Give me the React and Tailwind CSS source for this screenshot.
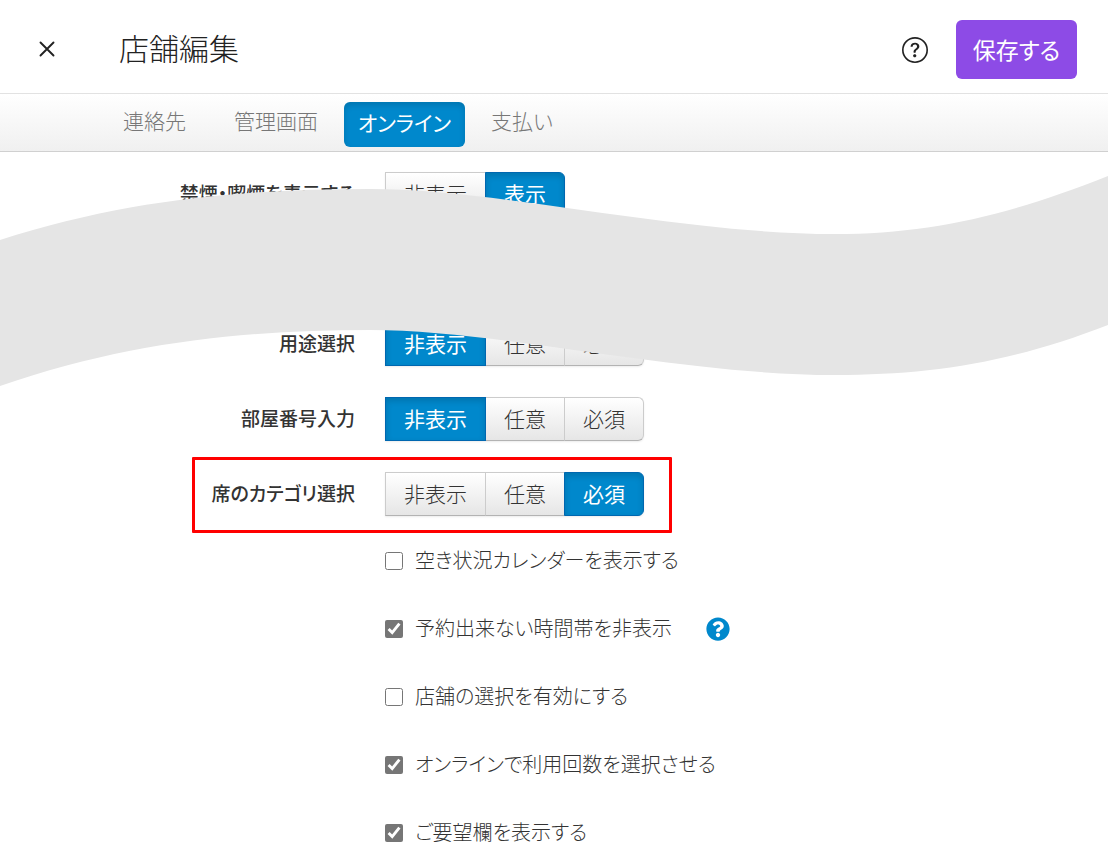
import React, { useState } from "react";
import { BsQuestionCircle } from "react-icons/bs";
import { FaQuestionCircle } from "react-icons/fa";

const tabs = ["連絡先", "管理画面", "オンライン", "支払い"];

const choiceFields = [
  {
    name: "smoking",
    label: "禁煙・喫煙を表示する",
    options: ["非表示", "表示"],
    value: "表示",
  },
  {
    name: "purpose",
    label: "用途選択",
    options: ["非表示", "任意", "必須"],
    value: "非表示",
    afterBreak: true,
  },
  {
    name: "room",
    label: "部屋番号入力",
    options: ["非表示", "任意", "必須"],
    value: "非表示",
  },
  {
    name: "category",
    label: "席のカテゴリ選択",
    options: ["非表示", "任意", "必須"],
    value: "必須",
    highlight: true,
  },
];

const checkFields = [
  { name: "calendar", label: "空き状況カレンダーを表示する", checked: false },
  {
    name: "hideTimes",
    label: "予約出来ない時間帯を非表示",
    checked: true,
    help: true,
  },
  { name: "selectShop", label: "店舗の選択を有効にする", checked: false },
  {
    name: "visits",
    label: "オンラインで利用回数を選択させる",
    checked: true,
  },
  { name: "requests", label: "ご要望欄を表示する", checked: true },
];

const ChoiceRow = ({ field }) => {
  const [value, setValue] = useState(field.value);

  return (
    <div
      className={`relative flex items-center gap-[30px] ${
        field.afterBreak ? "mt-[75px]" : ""
      }`}
    >
      <span
        id={field.name}
        className="w-[355px] shrink-0 pb-0.5 text-right text-[19px] leading-6 font-medium text-[#333]"
      >
        {field.label}
      </span>
      <div
        role="group"
        aria-labelledby={field.name}
        className="flex rounded-r-md shadow-[0_1px_2px_rgba(0,0,0,0.08)]"
      >
        {field.options.map((option) => (
          <button
            key={option}
            type="button"
            aria-pressed={option === value}
            onClick={() => setValue(option)}
            className={`-mr-px h-11 border px-[18px] pb-0.5 text-[21px] leading-6 last:mr-0 last:rounded-r-md ${
              option === value
                ? "z-10 border-[#0067b0] bg-[#0088cc] text-white shadow-[inset_0_3px_6px_rgba(0,0,0,0.15)]"
                : "border-[#ccc] border-b-[#b3b3b3] bg-linear-to-b from-white to-[#e6e6e6] font-light text-[#333]"
            }`}
          >
            {option}
          </button>
        ))}
      </div>
      {field.highlight && (
        <div className="pointer-events-none absolute -top-[15px] -bottom-[17px] left-[192px] w-[480px] rounded-[1px] border-3 border-[#ff0000]" />
      )}
    </div>
  );
};

const CheckRow = ({ field }) => {
  const [checked, setChecked] = useState(field.checked);

  return (
    <div className="flex h-14 items-center">
      <input
        id={field.name}
        type="checkbox"
        checked={checked}
        onChange={(e) => setChecked(e.target.checked)}
        className="size-[18px] accent-[#767676]"
      />
      <label
        htmlFor={field.name}
        className="pb-0.5 pl-3 text-[20px] leading-6 font-light text-[#333]"
      >
        {field.label}
      </label>
      {field.help && (
        <button type="button" aria-label="ヘルプ" className="ml-[34px]">
          <FaQuestionCircle className="size-6 text-[#0088cc]" />
        </button>
      )}
    </div>
  );
};

// Grey band that stands for the settings left out between the rows
const WaveBreak = () => (
  <svg
    viewBox="0 0 1108 212"
    preserveAspectRatio="none"
    className="pointer-events-none absolute inset-x-0 top-[23px] z-20 h-[212px] w-full"
    aria-hidden="true"
  >
    <path
      fill="#e5e5e5"
      d="M0 65 C130 23 250 14 370 14 C500 14 680 59 835 59 C930 59 1010 40 1108 1 V150 C1010 188 930 200 835 200 C680 200 500 155 370 155 C250 155 130 166 0 211 Z"
    />
  </svg>
);

const App = () => {
  const [tab, setTab] = useState("オンライン");

  return (
    <div className="min-h-screen bg-white font-['Noto_Sans_CJK_JP',sans-serif] [font-feature-settings:'palt']">
      <header className="flex h-[94px] items-center border-b border-[#e2e2e2] pt-1.5 pr-[31px] pl-[39px]">
        <button
          type="button"
          aria-label="閉じる"
          className="pb-0.5 text-[#222]"
        >
          <svg viewBox="0 0 16 16" className="size-4" aria-hidden="true">
            <path
              d="M1.5 1.5 L14.5 14.5 M14.5 1.5 L1.5 14.5"
              fill="none"
              stroke="currentColor"
              strokeWidth="1.9"
              strokeLinecap="round"
            />
          </svg>
        </button>
        <h1 className="ml-16 pb-1.5 text-[30px] leading-9 font-light text-[#222]">
          店舗編集
        </h1>
        <button
          type="button"
          aria-label="ヘルプ"
          className="mr-7 ml-auto text-[#222]"
        >
          <BsQuestionCircle className="size-[26px]" />
        </button>
        <button
          type="button"
          className="h-[59px] w-[121px] rounded-md bg-[#8d4be6] pb-0.5 text-[23px] leading-8 text-white"
        >
          保存する
        </button>
      </header>

      <nav className="flex h-[58px] items-center gap-1 border-b border-[#d0d0d0] bg-linear-to-b from-white to-[#f0f0f0] pt-1 pl-[101px]">
        {tabs.map((item) => (
          <button
            key={item}
            type="button"
            onClick={() => setTab(item)}
            className={`text-[21px] leading-6 ${
              item === tab
                ? "h-[45px] w-[121px] rounded-md bg-[#0088cc] pb-1.5 text-white shadow-[inset_0_3px_6px_rgba(0,0,0,0.15)]"
                : "px-[22px] pb-2.5 font-light text-[#777]"
            }`}
          >
            {item}
          </button>
        ))}
      </nav>

      <main className="relative pt-5">
        <form>
          <div className="flex flex-col gap-[31px]">
            {choiceFields.map((field) => (
              <ChoiceRow key={field.name} field={field} />
            ))}
          </div>
          <div className="mt-[17px] flex flex-col gap-3 pl-[385px]">
            {checkFields.map((field) => (
              <CheckRow key={field.name} field={field} />
            ))}
          </div>
        </form>
        <WaveBreak />
      </main>
    </div>
  );
};

export default App;
